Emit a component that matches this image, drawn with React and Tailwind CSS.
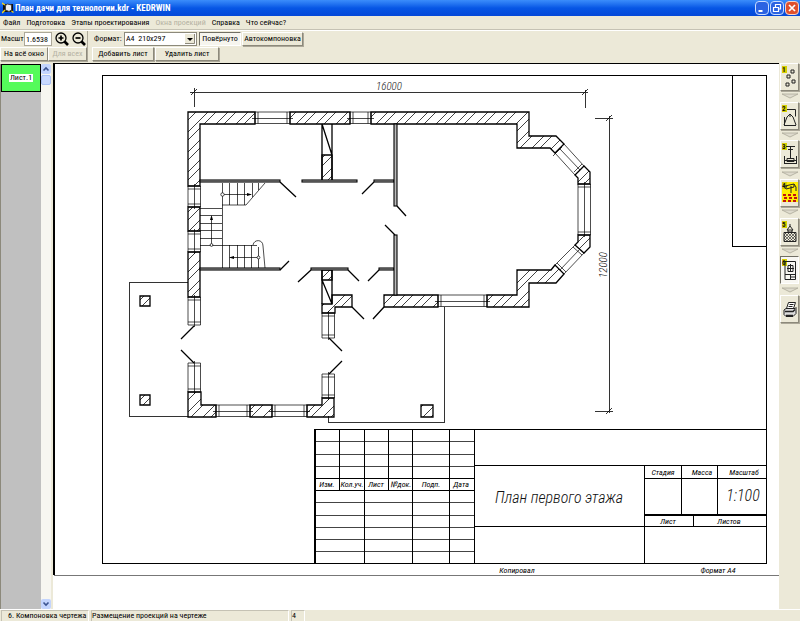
import * as React from "react";

const menu = ["Файл", "Подготовка", "Этапы проектирования", "Окна проекций", "Справка", "Что сейчас?"];

// solid masonry parts of the outer walls
const walls = [
  "188,112 255,112 255,124 200,124 200,186 188,186",
  "290,112 350,112 350,124 290,124",
  "371,112 529,112 529,136 556,136 564,144 555,153 550,148 517,148 517,124 371,124",
  "584,166 590,172 590,184 578,184 578,178 575,175",
  "578,235 590,235 590,247 584,253 575,245 578,242",
  "555,265 551,270 517,270 517,295 487,295 487,307 529,307 529,283 556,283 564,274",
  "384,295 438,295 438,307 384,307",
  "332,295 352,295 352,307 335,307 335,313 322,313 322,304 332,304",
  "322,398 334,398 334,417 307,417 307,405 322,405",
  "250,405 272,405 272,417 250,417",
  "188,392 201,392 201,405 216,405 216,417 188,417",
  "188,252 200,252 200,297 188,297",
  "188,207 200,207 200,231 188,231",
  "322,155 332,155 332,181 322,181",
  "322,270 332,270 332,280 322,280",
  "140,296 150,296 150,306 140,306",
  "140,395 150,395 150,405 140,405",
  "421,405 433,405 433,417 421,417",
];

const partitions = [
  [200, 180, 80, 2],
  [302, 180, 55, 2],
  [374, 180, 20, 2],
  [200, 268, 80, 2],
  [311, 268, 37, 2],
  [379, 268, 15, 2],
  [394, 124, 3, 82],
  [394, 235, 3, 60],
];

const rowWindows = [
  [255, 112, 35],
  [350, 112, 21],
  [438, 295, 49],
  [216, 405, 34],
  [272, 405, 35],
];

const columnWindows = [
  [188, 186, 21],
  [188, 231, 21],
  [188, 297, 28],
  [188, 363, 29],
  [322, 313, 25],
  [322, 374, 24],
  [578, 184, 51],
];

const tools = [
  { id: "1", label: "Объекты" },
  { id: "2", label: "Крыша" },
  { id: "3", label: "Размеры" },
  { id: "4", label: "Стены" },
  { id: "5", label: "Штриховка" },
  { id: "6", label: "Компоновка" },
  { id: "7", label: "Печать" },
];

const raised =
  "border border-t-white border-l-white border-r-[#8c897b] border-b-[#8c897b] bg-[#ece9d8] shadow-[1px_1px_0_#aca899]";

const sunken =
  "border border-t-[#c5c2b4] border-r-white border-b-white border-l-[#c5c2b4] whitespace-nowrap leading-2.5";

function AppIcon() {
  return (
    <svg className="h-3 w-3 shrink-0" viewBox="0 0 12 12">
      <path d="M1 2h10v8H1z" fill="#111" />
      <path d="M3.500 3.500l2-1.500 4 1v5l-2.500 1.500-3.500-1.500z" fill="#eee" stroke="#444" />
      <path d="M0 1l3 2M0 11l3-3M9.500 9l2 1.500" stroke="#eed21e" strokeWidth="1.500" />
    </svg>
  );
}

function TitleBar() {
  return (
    <header className="flex h-4 shrink-0 items-center gap-px bg-linear-to-b from-[#3b8dfb] via-[#0756e5] to-[#0448d8] pl-0.5 text-[9px] text-white">
      <AppIcon />
      <h1 className="flex-1 truncate font-bold">План дачи для технологии.kdr - KEDRWIN</h1>
      <div className="flex gap-px pr-px">
        <button aria-label="Свернуть" className="h-3.5 w-3.5 rounded-sm border border-[#c9dcff] bg-[#2b63e2]">
          <svg viewBox="0 0 12 12"><path d="M2.500 9h4" stroke="#fff" strokeWidth="2" /></svg>
        </button>
        <button aria-label="Восстановить" className="h-3.5 w-3.5 rounded-sm border border-[#c9dcff] bg-[#2b63e2]">
          <svg viewBox="0 0 12 12" fill="none" stroke="#fff" strokeWidth="1.200">
            <path d="M2.500 5.500h5v4h-5zM4.500 5V2.500h5v4.500H8" />
          </svg>
        </button>
        <button aria-label="Закрыть" className="h-3.5 w-3.5 rounded-sm border border-[#f4d5cb] bg-[#e0502c]">
          <svg viewBox="0 0 12 12"><path d="M3 3l6 6M9 3l-6 6" stroke="#fff" strokeWidth="1.700" /></svg>
        </button>
      </div>
    </header>
  );
}

function Magnifier({ plus }) {
  return (
    <svg className="h-4 w-4" viewBox="0 0 16 16" fill="none" stroke="#000">
      <circle cx="7" cy="7" r="5" strokeWidth="1.300" />
      <path d="M10.500 10.500L14 14" strokeWidth="2.600" />
      <path d={plus ? "M4.500 7h5M7 4.500v5" : "M4.500 7h5"} strokeWidth="1.700" />
    </svg>
  );
}

function Toolbar() {
  return (
    <div className="flex h-8 shrink-0 items-start">
      <div className="w-[88px] border-r border-[#aca899]">
        <div className="flex h-4 items-center">
          <label htmlFor="scale" className="w-6 pl-px">Масшт</label>
          <input id="scale" defaultValue="1.6538" className="h-3.5 w-7 border border-[#aca899] bg-white pl-px" />
          <button aria-label="Увеличить" className="ml-0.5"><Magnifier plus /></button>
          <button aria-label="Уменьшить" className="ml-px"><Magnifier /></button>
        </div>
        <div className="flex">
          <button className={`h-3.5 w-12 whitespace-nowrap ${raised}`}>На всё окно</button>
          <button disabled className={`h-3.5 flex-1 whitespace-nowrap text-[#b5b2a3] ${raised}`}>Для всех</button>
        </div>
      </div>
      <div className="ml-1 flex flex-col">
        <div className="flex h-4 items-center">
          <label htmlFor="format" className="w-8 pl-0.5">Формат:</label>
          <div className="relative">
            <select id="format" className="h-3.5 w-[73px] appearance-none border border-[#8c897b] bg-white pl-px">
              <option>{"A4\u00a0 210x297"}</option>
              <option>{"A3\u00a0 297x420"}</option>
            </select>
            <svg className="pointer-events-none absolute top-0.5 right-0.5 h-2.5 w-2.5 bg-[#ece9d8]" viewBox="0 0 10 10">
              <path d="M2 4h6L5 7z" />
              <path d="M0 9.500h9.500V0" fill="none" stroke="#8c897b" />
            </svg>
          </div>
          <button className="ml-0.5 h-3.5 w-[42px] border border-t-[#716f64] border-r-white border-b-white border-l-[#716f64] bg-[#f6f5ee] whitespace-nowrap">
            Повёрнуто
          </button>
          <button className={`ml-px h-3.5 w-[61px] whitespace-nowrap ${raised}`}>Автокомпоновка</button>
        </div>
        <div className="flex gap-px">
          <button className={`h-3.5 w-[62px] whitespace-nowrap ${raised}`}>Добавить лист</button>
          <button className={`h-3.5 w-16 whitespace-nowrap ${raised}`}>Удалить лист</button>
        </div>
      </div>
    </div>
  );
}

function Arrow({ up }) {
  return (
    <button aria-label={up ? "Вверх" : "Вниз"} className="h-2.5 w-2.5 rounded-xs bg-[#c3d4fd]">
      <svg viewBox="0 0 10 10" fill="none" stroke="#3b5390" strokeWidth="1.600">
        <path d={up ? "M2.500 6.500l2.500-2.500 2.500 2.500" : "M2.500 3.500l2.500 2.500 2.500-2.500"} />
      </svg>
    </button>
  );
}

function SheetList() {
  return (
    <aside className="flex shrink-0 pt-px">
      <div className="w-[41px] border-l border-[#8c897b] bg-[#c0c0c0]">
        <button className="flex h-7 w-10 items-center justify-center border border-black bg-[#55fb5b]">
          <span className="bg-white px-px leading-2">Лист.1</span>
        </button>
      </div>
      <div className="flex w-2.5 flex-col items-center bg-[#f7f6f1]">
        <Arrow up />
        <div className="mt-px h-2.5 w-2.5 rounded-xs border border-[#a9c0f5] bg-[#c8d8fe]" />
        <div className="flex-1" />
        <Arrow />
      </div>
      <div className="w-0.5 bg-[#ece9d8]" />
    </aside>
  );
}

function Windows() {
  return (
    <g strokeWidth="0.700">
      {rowWindows.map(([x, y, w]) => (
        <path
          key={`${x}-${y}`}
          d={`M${x} ${y}h${w}v11.500h-${w}zM${x + 3} ${y}v11.500M${x + w - 3} ${y}v11.500M${x - 3} ${y + 6.5}h${w + 6}`}
        />
      ))}
      {columnWindows.map(([x, y, h]) => (
        <path
          key={`${x}-${y}`}
          d={`M${x} ${y}h12.500v${h}h-12.500zM${x} ${y + 3}h12.500M${x} ${y + h - 3}h12.500M${x + 6.5} ${y - 2}v${h + 4}`}
        />
      ))}
      <path d="M564 144L584 166M555 153L575 175M560 149L580 170M562 147L553 156M582 164L574 172" />
      <path d="M584 253L564 274M575 245L555 265M579 250L560 270M582 255L573 247M566 272L557 263" />
    </g>
  );
}

function Stairs() {
  return (
    <g strokeWidth="0.700">
      <path d="M222.500 183V245M222 205H246L265 183M229.500 183V205M237.500 183V205M244.500 183V205M252.500 183V197M258.500 183V190" />
      <path d="M222 194.500H251" />
      <path d="M200 208.500H222M200 215.500H222M200 223.500H222M200 230.500H222M200 238.500H222M200 245.500H222M211.500 245V217" />
      <path d="M222 245.500H257M222.500 245V268M229.500 245V268M237.500 245V268M244.500 245V268M251.500 245V268M258.500 247V268" />
      <path d="M253 245C254 239 263 239 263 246L265 268M258 257.500H230" />
      <circle cx="222.500" cy="194.500" r="1.700" fill="#fff" />
      <circle cx="211.500" cy="245" r="1.400" fill="#fff" />
      <circle cx="258.500" cy="257.500" r="1.400" fill="#fff" />
      <path d="M252 194.500l-5-1.500v3zM211.500 215l-1.500 5h3zM229 257.500l5-1.500v3z" fill="#000" stroke="none" />
    </g>
  );
}

function FloorPlan() {
  return (
    <g fill="none" stroke="#000">
      <g strokeWidth="1" shapeRendering="crispEdges" stroke="#333">
        <path d="M188 282.500H129.500V416.500H188M444.500 307V422.500H328.500V416" />
        <path d="M190 92.500H588M194.500 88V107M585.500 90V108M609.500 116V413M595 118.500H613M595 411.500H613" />
      </g>
      <path d="M191 95l6-6M582 95l6-6M606 121l6-6M606 414l6-6" strokeWidth="0.800" />
      <g strokeWidth="1.300">
        {walls.map((points) => (
          <polygon key={points} points={points} fill="url(#hatch)" />
        ))}
        <path d="M322 124V181M332 124V181M322 124L332 155M322 270V304M332 270V295M332 280V304M322 280L332 304" />
      </g>
      <g fill="#bbb" strokeWidth="1.100">
        {partitions.map(([x, y, w, h]) => (
          <rect key={`${x}-${y}`} x={x} y={y} width={w} height={h} />
        ))}
      </g>
      <path
        strokeWidth="1.300"
        d="M280 182l16 15M374 182l-12 12M397 206l9 10M385 225l10 10M280 270l9-9M311 270l-13 12M348 270l11 11M379 270l-11 11M352 307l12 12M384 307l-11 12M329 338l13 13M329 374l13-13M194 326l-13 13M194 363l-13-13"
      />
      <Windows />
      <Stairs />
    </g>
  );
}

function TitleBlock() {
  return (
    <g>
      <g fill="none" stroke="#000" shapeRendering="crispEdges">
        <path
          strokeWidth="1"
          stroke="#444"
          d="M315 441.500H474M315 454.500H474M315 466.500H474M315 502.500H474M315 515.500H474M315 527.500H474M315 539.500H474M315 551.500H474"
        />
        <path
          strokeWidth="1"
          d="M315 429.500H766M315 478.500H474M315 490.500H474M339.500 429V490M364.500 429V563M388.500 429V490M412.500 429V563M449.500 429V563M474.500 429V563M474 465.500H766M474 526.500H766M644.500 465V563M681.500 465V515M717.500 465V515M644 478.500H766M693.500 515V527"
        />
        <path strokeWidth="2" d="M315 429V563M644 515H766" />
      </g>
      <g fontSize="8" textAnchor="middle">
        <text x="327" y="487">Изм.</text>
        <text x="352" y="487">Кол.уч.</text>
        <text x="376" y="487">Лист</text>
        <text x="401" y="487">№док.</text>
        <text x="431" y="487">Подп.</text>
        <text x="461" y="487">Дата</text>
        <text x="663" y="475">Стадия</text>
        <text x="702" y="475">Масса</text>
        <text x="744" y="475">Масштаб</text>
        <text x="668" y="524">Лист</text>
        <text x="729" y="524">Листов</text>
        <text x="517" y="573">Копировал</text>
        <text x="718" y="573">Формат А4</text>
      </g>
      <g textAnchor="middle" fill="#111" className="font-light">
        <text x="559" y="503" fontSize="16">План первого этажа</text>
        <text x="743" y="501" fontSize="16">1:100</text>
      </g>
    </g>
  );
}

function Sheet() {
  return (
    <main className="min-w-0 flex-1 overflow-hidden border-t border-black bg-white">
      <svg
        className="block h-auto w-full font-['Roboto_Condensed','Roboto',sans-serif] italic"
        viewBox="53 64 726 546"
      >
        <defs>
          <pattern id="hatch" width="20" height="20" patternUnits="userSpaceOnUse">
            <path d="M-2 22L22-2M-2 10L10-2M6 22L22 6" stroke="#111" strokeWidth="0.800" />
          </pattern>
        </defs>
        <g fill="none" stroke="#000" shapeRendering="crispEdges">
          <path d="M54 63V575" strokeWidth="2" />
          <path d="M54 575.500H779" stroke="#777" strokeWidth="1" />
          <path d="M102.500 75.500H766.500V563.500H102.500zM732.500 75V246.500H766" strokeWidth="1" />
        </g>
        <FloorPlan />
        <g fontSize="11" fill="#111" className="font-light">
          <text x="376" y="90">16000</text>
          <text transform="translate(607 278) rotate(-90)">12000</text>
        </g>
        <TitleBlock />
      </svg>
    </main>
  );
}

function ToolIcon({ id }) {
  return (
    <svg className="h-6 w-4" viewBox="0 0 16 24" fill="none" stroke="#222" strokeWidth="1">
      {id === "4" && <path d="M0 1h16v20H0z" fill="#ffee00" stroke="none" />}
      {id !== "7" && <path d="M0 1h5v7H0z" fill="#d8cf00" stroke="none" />}
      {id === "1" && <path d="M9 5h3v3H9zM5 10h3v3H5zM10 15h3v3h-3zM4 18h3v3H4z" />}
      {id === "2" && <path d="M5 5.500h8.500v7M2.500 13v8M2 21l3-8 3-3 3 3 3 8M8 10v3M2 21.500h12" />}
      {id === "3" && <path d="M4 4.500h9M8.500 4v12M6 7.500h5M2.500 14v8M14.500 14v8M5 16.500h7v3H5zM2 18.500h12M2 21.500h12" />}
      {id === "4" && (
        <>
          <path d="M3 5l9-2 2 3v4M4 8l8-2M9 5v7M5 5l-2 3M12 3v3" />
          <path d="M1 14h3m2 0h3m2 0h3M2 17h3m2 0h3m2 0h3M1 20h3m2 0h3m2 0h3" stroke="#c11313" strokeWidth="2" />
        </>
      )}
      {id === "5" && (
        <>
          <path d="M8 4v2M8 6l-3 4h6zM6 10v2h4v-2M2 12.500h12v9H2z" />
          <path d="M2 15l3-3M2 18l6-6M2 21l9-9M5 21l9-9M8 21l6-6M11 21l3-3M2 18l3 3M2 15l6 6M2 12l9 9M5 12l9 9M8 12l6 6M11 12l3 3" strokeWidth="0.600" />
        </>
      )}
      {id === "6" && <path d="M3 3.500h10.500v18H3zM6 7.500h5v6H6zM8.500 6v8M5 10.500h7M3 16.500h10M8.500 16v5M9 19h4" />}
      {id === "7" && (
        <>
          <path d="M4.500 11.500l2-6h7l-2 6zM7.500 7.500h4M6.500 9.500h4" fill="#fff" />
          <path d="M2 13l2-1.500h9l1-1v6l-3 3H4l-2-2z" fill="#ddd" />
          <path d="M3 14.500h8l2-2M4 18.500h7" strokeWidth="1.400" />
        </>
      )}
      {id !== "7" && (
        <text x="0" y="7" fontSize="7" fontWeight="bold" fill="#111" stroke="none">
          {id}
        </text>
      )}
    </svg>
  );
}

function ToolRail() {
  return (
    <nav className="w-[21px] shrink-0 pl-px">
      <div className="flex h-[260px] flex-col justify-between">
        {tools.map((tool, i) => (
          <React.Fragment key={tool.id}>
            {i > 0 && (
              <svg className="mx-auto h-1.5 w-4 shrink-0" viewBox="0 0 16 6" fill="#dedbcd" stroke="#aca899" strokeWidth="0.800">
                <path d="M0 1h16L8 5z" />
              </svg>
            )}
            <button
              aria-label={tool.label}
              className={
                tool.id === "6"
                  ? "flex h-7 w-[19px] shrink-0 items-center justify-center border border-t-[#716f64] border-r-white border-b-white border-l-[#716f64] bg-[#f8f7f2]"
                  : `flex h-7 w-[19px] shrink-0 items-center justify-center ${raised}`
              }
            >
              <ToolIcon id={tool.id} />
            </button>
          </React.Fragment>
        ))}
      </div>
    </nav>
  );
}

export default function App() {
  return (
    <div className="flex h-screen flex-col overflow-hidden bg-[#ece9d8] font-['Roboto_Condensed','Roboto',sans-serif] text-[8px] leading-3 text-black">
      <TitleBar />
      <nav className="flex h-3.5 shrink-0 items-center gap-1.5 border-b border-[#c5c2b4] pl-[3px]">
        {menu.map((item) => (
          <button key={item} disabled={item === "Окна проекций"} className="whitespace-nowrap disabled:text-[#b5b2a3]">
            {item}
          </button>
        ))}
      </nav>
      <div className="h-px shrink-0 bg-white" />
      <Toolbar />
      <div className="flex min-h-0 flex-1">
        <SheetList />
        <Sheet />
        <ToolRail />
      </div>
      <footer className="flex h-3 shrink-0 items-center gap-0.5 border-t border-white pl-px">
        <div className={`w-[88px] pl-1.5 ${sunken}`}>6. Компоновка чертежа</div>
        <div className={`w-[198px] ${sunken}`}>Размещение проекций на чертеже</div>
        <div className={`w-3.5 ${sunken}`}>4</div>
      </footer>
    </div>
  );
}
